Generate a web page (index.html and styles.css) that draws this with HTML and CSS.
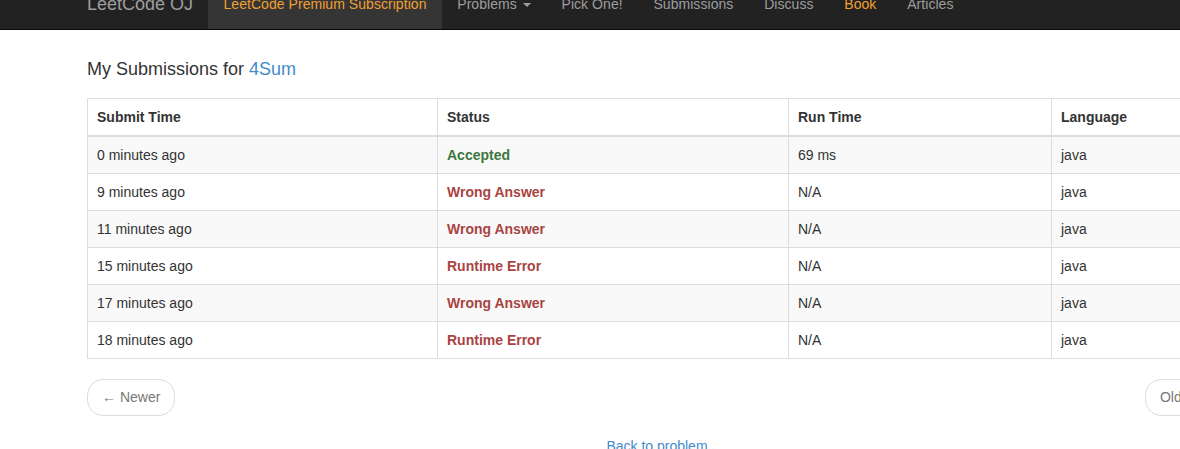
FILE: index.html
```html
<!DOCTYPE html>
<html>
<head>
<meta charset="utf-8">
<link rel="stylesheet" href="styles.css">
</head>
<body>
<div class="shift">
  <nav class="navbar">
    <div class="container nav-inner">
      <a class="brand">LeetCode OJ</a>
      <ul class="nav">
        <li class="active"><a class="orange">LeetCode Premium Subscription</a></li>
        <li><a>Problems <span class="caret"></span></a></li>
        <li><a>Pick One!</a></li>
        <li><a>Submissions</a></li>
        <li><a>Discuss</a></li>
        <li><a class="orange">Book</a></li>
        <li><a>Articles</a></li>
      </ul>
    </div>
  </nav>
  <div class="container">
    <h4 class="title">My Submissions for <a class="link">4Sum</a></h4>
    <table class="table">
      <colgroup>
        <col class="c1"><col class="c2"><col class="c3"><col class="c4">
      </colgroup>
      <thead>
        <tr><th>Submit Time</th><th>Status</th><th>Run Time</th><th>Language</th></tr>
      </thead>
      <tbody>
        <tr><td>0 minutes ago</td><td class="ok">Accepted</td><td>69 ms</td><td>java</td></tr>
        <tr><td>9 minutes ago</td><td class="bad">Wrong Answer</td><td>N/A</td><td>java</td></tr>
        <tr><td>11 minutes ago</td><td class="bad">Wrong Answer</td><td>N/A</td><td>java</td></tr>
        <tr><td>15 minutes ago</td><td class="bad">Runtime Error</td><td>N/A</td><td>java</td></tr>
        <tr><td>17 minutes ago</td><td class="bad">Wrong Answer</td><td>N/A</td><td>java</td></tr>
        <tr><td>18 minutes ago</td><td class="bad">Runtime Error</td><td>N/A</td><td>java</td></tr>
      </tbody>
    </table>
    <ul class="pager">
      <li><a class="pill">&larr; Newer</a></li>
      <li><a class="pill">Older &rarr;</a></li>
    </ul>
    <div class="back"><a class="link">Back to problem</a></div>
  </div>
</div>
</body>
</html>
```
FILE: styles.css
```css
html, body {
  margin: 0;
  padding: 0;
  overflow: hidden;
  background: #fff;
}
body {
  font-family: "Liberation Sans", Arial, Helvetica, sans-serif;
  font-size: 14px;
  line-height: 20px;
  color: #333;
}
.shift {
  margin-top: -21px;
}
.navbar {
  width: 1180px;
  height: 50px;
  background: #222;
  border-bottom: 1px solid #080808;
  margin-bottom: 30px;
}
.container {
  width: 1140px;
  margin-left: 72px;
  padding: 0 15px;
}
.nav-inner {
  display: flex;
  height: 50px;
}
.brand {
  display: block;
  font-size: 18px;
  line-height: 20px;
  padding: 15px;
  margin-left: -15px;
  color: #9d9d9d;
}
.nav {
  display: flex;
  list-style: none;
  margin: 0;
  padding: 0;
}
.nav li a {
  display: block;
  padding: 15px 15.4px;
  line-height: 20px;
  color: #9d9d9d;
  white-space: nowrap;
  letter-spacing: 0.05px;
}
.nav li.active a {
  background: #353535;
}
.nav li a.orange {
  color: #f0a030;
}
.caret {
  display: inline-block;
  width: 0;
  height: 0;
  margin-left: 2px;
  vertical-align: middle;
  border-top: 4px solid #9d9d9d;
  border-left: 4px solid transparent;
  border-right: 4px solid transparent;
}
.title {
  font-size: 18px;
  font-weight: normal;
  line-height: 1.1;
  margin: 10px 0 18px;
  color: #333;
}
.link {
  color: #428bca;
  text-decoration: none;
}
.table {
  width: 1140px;
  table-layout: fixed;
  border-collapse: collapse;
  border: 1px solid #ddd;
  margin-bottom: 20px;
}
.c1 { width: 350px; }
.c2 { width: 351px; }
.c3 { width: 263px; }
.c4 { width: 176px; }
.table th, .table td {
  text-align: left;
  padding: 8px 9px;
  line-height: 20px;
  border: 1px solid #ddd;
  white-space: nowrap;
}
.table th {
  font-weight: bold;
  border-bottom: 2px solid #ddd;
}
.table tbody tr:nth-child(odd) {
  background: #f9f9f9;
}
.table td.ok {
  color: #3c763d;
  font-weight: bold;
}
.table td.bad {
  color: #a94442;
  font-weight: bold;
}
.pager {
  list-style: none;
  margin: 20px 0;
  padding: 0;
  display: flex;
  justify-content: space-between;
}
.pill {
  display: inline-block;
  padding: 7px 14px;
  line-height: 21px;
  border: 1px solid #ddd;
  border-radius: 16px;
  background: #fff;
  color: #777;
}
.back {
  text-align: center;
}
```
